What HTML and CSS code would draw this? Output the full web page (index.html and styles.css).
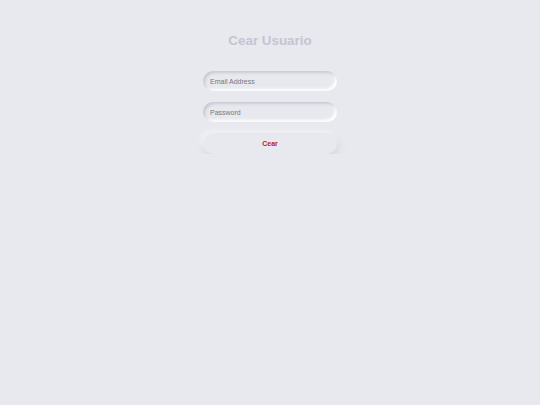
FILE: index.html
```html
<!DOCTYPE html>
<html lang="es">
<head>
  <meta charset="UTF-8">
  <title>Cear Usuario</title>
  <link rel="stylesheet" href="styles.css">
</head>
<body>
  <div class="container">
    <h1>Cear Usuario</h1>
    <input type="email" placeholder="Email Address">
    <input type="password" placeholder="Password">
    <button>Cear</button>
  </div>
</body>
</html>
```

FILE: styles.css
```css
body {
  margin: 0;
  background-color: #e8e9ee;
  font-family: "Liberation Sans", Arial, sans-serif;
}
.container {
  display: flex;
  flex-direction: column;
  align-items: center;
  padding-top: 33px;
}
h1 {
  margin: 0 0 22px;
  font-size: 13.4px;
  line-height: 16px;
  color: #c3c5d4;
}
input, button {
  box-sizing: border-box;
  width: 134px;
  height: 20px;
  border: none;
  border-radius: 10px;
  background-color: #e8e9ee;
  font-family: inherit;
  font-size: 7px;
  outline: none;
}
input {
  margin-bottom: 11px;
  padding: 0 7px;
  color: #555;
  box-shadow: inset 2px 2px 3px #c8c9d6, inset -2px -2px 3px #ffffff;
}
input::placeholder {
  color: #76777f;
}
button {
  height: 21px;
  color: #c21a1a;
  font-weight: bold;
  cursor: pointer;
  box-shadow: 1px 4px 8px #d3d4de, -2px -2px 5px #f6f6f9;
}
```
